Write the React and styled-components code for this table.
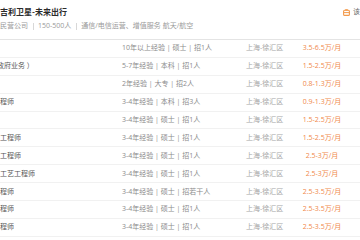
import React from "react";
import styled, { createGlobalStyle } from "styled-components";

const Global = createGlobalStyle`
  html, body { margin: 0; padding: 0; background: #fff; }
  body { font-family: "Open Sans", "Noto Sans CJK SC", sans-serif; }
`;

const Page = styled.div`
  width: 360px;
  height: 240px;
  overflow: hidden;
  background: #fff;
`;

const Header = styled.header`
  height: 40px;
  box-sizing: border-box;
  padding-top: 7px;
  border-bottom: 1px solid #e4e4e4;
  display: flex;
  flex-direction: column;
  gap: 4px;
`;

const TitleRow = styled.div`
  display: flex;
  align-items: center;
  height: 10px;
`;

const Title = styled.h1`
  flex: 1;
  margin: 0;
  font-size: 8px;
  line-height: 10px;
  font-weight: 700;
  color: #2b2b2b;
  white-space: nowrap;
  font-family: "Noto Sans CJK SC", sans-serif;
`;

const Action = styled.div`
  width: 17px;
  display: flex;
  align-items: center;
  gap: 3px;
  overflow: hidden;
  white-space: nowrap;
  font-size: 7px;
  line-height: 10px;
  color: #666;
`;

const Meta = styled.div`
  display: flex;
  align-items: center;
  height: 10px;
  font-size: 7px;
  line-height: 10px;
  color: #9a9a9a;
  white-space: nowrap;
`;

const Bar = styled.span`
  width: 1px;
  height: 7px;
  background: #d8d8d8;
  margin: 0 4.5px;
`;

const List = styled.ul`
  margin: 0;
  padding: 0;
  list-style: none;
`;

const Row = styled.li`
  height: 17.9px;
  box-sizing: border-box;
  border-bottom: 1px solid #f1f1f1;
  display: grid;
  grid-template-columns: 122px 124px 52px 62px;
  align-items: center;
  font-size: 7px;
  line-height: 10px;
  white-space: nowrap;
`;

const Name = styled.span`
  color: #555;
  overflow: hidden;
  text-indent: ${(p) => p.$cut || 0}px;
`;

const Info = styled.span`
  color: #8c8c8c;
`;

const Place = styled.span`
  color: #a6a6a6;
`;

const Salary = styled.span`
  color: #f0884a;
  text-align: center;
  padding-right: 14px;
`;

const CompanyIcon = () => (
  <svg width="7" height="7" viewBox="0 0 7 7" style={{ flexShrink: 0 }}>
    <rect x="0.6" y="1.2" width="5.8" height="5.2" rx="1" fill="none" stroke="#f39a4c" strokeWidth="1.1" />
    <line x1="0.6" y1="3.6" x2="6.4" y2="3.6" stroke="#f39a4c" strokeWidth="1" />
    <rect x="2.2" y="0.2" width="2.6" height="1.4" fill="#f39a4c" />
  </svg>
);

const jobs = [
  { name: "", info: "10年以上经验 | 硕士 | 招1人", salary: "3.5-6.5万/月" },
  { name: "政府业务 ）", cut: -3, info: "5-7年经验 | 本科 | 招1人", salary: "1.5-2.5万/月" },
  { name: "", info: "2年经验 | 大专 | 招2人", salary: "0.8-1.3万/月" },
  { name: "程师", info: "3-4年经验 | 本科 | 招3人", salary: "0.9-1.3万/月" },
  { name: "", info: "3-4年经验 | 硕士 | 招1人", salary: "1.5-2.5万/月" },
  { name: "工程师", info: "3-4年经验 | 硕士 | 招1人", salary: "1.5-2.5万/月" },
  { name: "工程师", info: "3-4年经验 | 硕士 | 招1人", salary: "2.5-3万/月" },
  { name: "工艺工程师", info: "3-4年经验 | 硕士 | 招1人", salary: "2.5-3万/月" },
  { name: "程师", info: "3-4年经验 | 硕士 | 招若干人", salary: "2.5-3.5万/月" },
  { name: "程师", info: "3-4年经验 | 硕士 | 招1人", salary: "2.5-3.5万/月" },
  { name: "程师", info: "3-4年经验 | 硕士 | 招1人", salary: "2.5-3.5万/月" },
];

export default function App() {
  return (
    <Page>
      <Global />
      <Header>
        <TitleRow>
          <Title>吉利卫星-未来出行</Title>
          <Action>
            <CompanyIcon />
            <span>该公司所有职位</span>
          </Action>
        </TitleRow>
        <Meta>
          <span>民营公司</span>
          <Bar />
          <span>150-500人</span>
          <Bar />
          <span>通信/电信运营、增值服务 航天/航空</span>
        </Meta>
      </Header>
      <List>
        {jobs.map((j, i) => (
          <Row key={i}>
            <Name $cut={j.cut}>{j.name}</Name>
            <Info>{j.info}</Info>
            <Place>上海-徐汇区</Place>
            <Salary>{j.salary}</Salary>
          </Row>
        ))}
      </List>
    </Page>
  );
}
